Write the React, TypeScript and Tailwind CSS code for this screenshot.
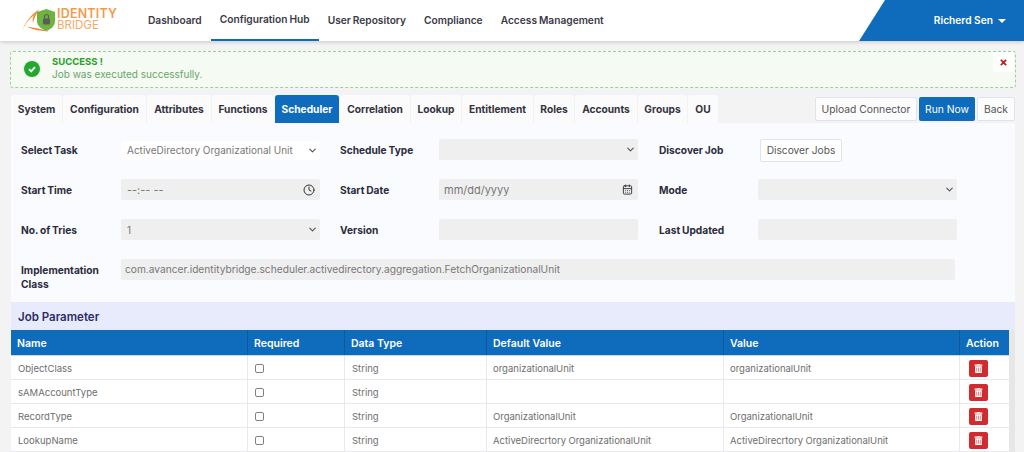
import React from "react";
import { ChevronDown, Clock, CalendarDays } from "lucide-react";
import { FaTrashAlt, FaTimes } from "react-icons/fa";

const nav = ["Dashboard", "Configuration Hub", "User Repository", "Compliance", "Access Management"];
const tabs: [string, string][] = [
  ["System", "w-[51px]"], ["Configuration", "w-[83px]"], ["Attributes", "w-[64px]"], ["Functions", "w-[62px]"],
  ["Scheduler", "w-[64px]"], ["Correlation", "w-[70px]"], ["Lookup", "w-[50px]"], ["Entitlement", "w-[71px]"],
  ["Roles", "w-[40px]"], ["Accounts", "w-[62px]"], ["Groups", "w-[49px]"], ["OU", "w-[30px]"],
];
const rows = [
  ["ObjectClass", "String", "organizationalUnit", "organizationalUnit"],
  ["sAMAccountType", "String", "", ""],
  ["RecordType", "String", "OrganizationalUnit", "OrganizationalUnit"],
  ["LookupName", "String", "ActiveDirecrtory OrganizationalUnit", "ActiveDirecrtory OrganizationalUnit"],
];
const cols = "grid grid-cols-[236px_97px_142px_237px_236px_50px]";

function Label({ children, w = "w-[99px]" }: { children: React.ReactNode; w?: string }) {
  return <div className={`${w} shrink-0 pt-[1px] text-[10.2px] font-bold leading-[14px] text-[#2c2c3c] [word-spacing:-0.6px]`}>{children}</div>;
}

function Field({ white, text, icon, w = "w-[199px]", textClass = "text-[10px]", pl = "pl-[6px]" }: { white?: boolean; text?: string; icon?: React.ReactNode; w?: string; textClass?: string; pl?: string }) {
  return (
    <div className={`${w} shrink-0 rounded-[2px] flex items-center justify-between ${pl} pr-[5px] ${textClass} text-[#777] ${white ? "bg-white h-[19px] mt-[1px]" : "bg-[#efefef] h-[21px]"}`}>
      <span className="truncate pt-[1px]">{text}</span>
      {icon}
    </div>
  );
}

const chev = <ChevronDown size={11} strokeWidth={2.5} className="text-[#555] mr-[-3px]" />;

export default function App() {
  return (
    <div className="w-[1024px] h-[452px] overflow-hidden bg-[#f3f3f3] font-['Inter','Liberation_Sans',sans-serif]">
      <header className="h-[41px] bg-white shadow-[0_1px_4px_rgba(0,0,0,0.18)] flex relative">
        <div className="w-[139px] pl-[20px] pt-[7px] flex shrink-0">
          <svg width="37" height="27" viewBox="0 0 37 27">
            <path d="M1 25.5 C5 16 11 7 19 2.5 C16 7 14 12 13 16 C12 12.5 13 10 14 8 C9 12 4 19 1 25.5Z" fill="#f28c38" />
            <path d="M7 19.5 C14 21 22 21.5 29 24.5 C21 24 13 23 7 19.5Z" fill="#f28c38" />
            <path d="M17 5 L26.5 2 L35 5 L35 14 C35 19 31 22 26.5 24 C21.5 22 17 19 17 14Z" fill="#6cb33f" />
            <rect x="23" y="11.5" width="7" height="6" rx="1" fill="#5b5b5b" />
            <path d="M24.5 11.5 V9.5 a2 2 0 0 1 4 0 V11.5" fill="none" stroke="#5b5b5b" strokeWidth="1.2" />
          </svg>
          <div className="mt-[1px] leading-[11.5px] text-[#f29a4c]">
            <div className="text-[12.5px] font-semibold tracking-[0.2px]">IDENTITY</div>
            <div className="text-[11.5px] font-normal text-[#f4a968]">BRIDGE</div>
          </div>
        </div>
        <nav className="flex text-[10.2px] font-semibold text-[#3a3a48] [word-spacing:-0.6px]">
          {nav.map((n) => (
            <div key={n} className={`px-[9px] h-[41px] flex items-center whitespace-nowrap ${n === "Configuration Hub" ? "border-b-[2px] border-[#0f6cbd]" : ""}`}>
              {n}
            </div>
          ))}
        </nav>
        <div className="absolute right-0 top-0 h-[41px] w-[165px] bg-[#0f6cbd] [clip-path:polygon(26px_0,100%_0,100%_100%,0_100%)] flex items-center justify-end pr-[18px] text-[10.2px] font-semibold text-white">
          Richerd Sen
          <span className="ml-[5px] w-0 h-0 border-x-[4px] border-x-transparent border-t-[4px] border-t-white" />
        </div>
      </header>

      <div className="mx-[10px] mt-[10px] h-[37px] w-[1006px] rounded-[3px] border border-dashed border-[#9ed09e] bg-[#f5faf3] flex relative">
        <div className="ml-[13px] mt-[9px] w-[16px] h-[16px] rounded-full bg-[#22a82e] flex items-center justify-center">
          <svg width="10" height="10" viewBox="0 0 10 10"><path d="M2 5.2 L4.2 7.4 L8 3" fill="none" stroke="#fff" strokeWidth="1.9" /></svg>
        </div>
        <div className="ml-[12px] mt-[3px] leading-[13px]">
          <div className="text-[9.5px] font-bold text-[#27a127]">SUCCESS !</div>
          <div className="text-[10px] text-[#6aa56a]">Job was executed successfully.</div>
        </div>
        <div className="absolute right-[1px] top-0 w-[21px] h-[20px] bg-white flex items-center justify-center">
          <FaTimes size={9} className="text-[#c01818]" />
        </div>
      </div>

      <div className="flex mt-[7px] ml-[11px] h-[28px] w-[1004px] items-start">
        <div className="flex gap-[1px]">
          {tabs.map(([t, w]) => (
            <div key={t} className={`${w} h-[28px] pt-[2px] rounded-t-[3px] flex items-center justify-center text-[10.2px] font-bold ${t === "Scheduler" ? "bg-[#0f6cbd] text-white" : "bg-[#fbfbfb] text-[#333340]"}`}>
              {t}
            </div>
          ))}
        </div>
        <div className="ml-auto mt-[2px] flex gap-[2px]">
          <div className="w-[102px] h-[24px] pt-[1px] rounded-[2px] border border-[#dfe3ee] bg-[#fcfcfc] flex items-center justify-center text-[10.3px] text-[#555]">Upload Connector</div>
          <div className="w-[56px] h-[24px] pt-[1px] rounded-[2px] bg-[#0f6cbd] flex items-center justify-center text-[10.3px] text-white">Run Now</div>
          <div className="w-[38px] h-[24px] pt-[1px] rounded-[2px] border border-[#dfe3ee] bg-[#fcfcfc] flex items-center justify-center text-[10.3px] text-[#555]">Back</div>
        </div>
      </div>

      <main className="ml-[11px] w-[1004px] h-[400px] bg-[#fafbff]">
        <div className="pt-[16px] pl-[10px] flex flex-col gap-[19px]">
          <div className="flex items-center h-[21px]">
            <Label w="w-[100px]">Select Task</Label>
            <Field white text="ActiveDirectory Organizational Unit" icon={chev} />
            <div className="w-[20px]" />
            <Label>Schedule Type</Label>
            <Field icon={chev} />
            <div className="w-[21px]" />
            <Label>Discover Job</Label>
            <div className="w-[82px] h-[23px] ml-[2px] mt-[2px] rounded-[2px] border border-[#dfe3ee] bg-white flex items-center justify-center text-[10.2px] text-[#555]">Discover Jobs</div>
          </div>
          <div className="flex items-center h-[21px]">
            <Label w="w-[100px]">Start Time</Label>
            <Field textClass="text-[11px]" text="--:-- --" icon={<Clock size={12} className="text-[#333]" />} />
            <div className="w-[20px]" />
            <Label>Start Date</Label>
            <Field textClass="text-[11px]" pl="pl-[5px]" text="mm/dd/yyyy" icon={<CalendarDays size={11} className="text-[#333]" />} />
            <div className="w-[21px]" />
            <Label>Mode</Label>
            <Field icon={chev} />
          </div>
          <div className="flex items-center h-[21px]">
            <Label w="w-[100px]">No. of Tries</Label>
            <Field text="1" icon={chev} />
            <div className="w-[20px]" />
            <Label>Version</Label>
            <Field />
            <div className="w-[21px]" />
            <Label>Last Updated</Label>
            <Field />
          </div>
          <div className="flex items-start h-[31px]">
            <div className="mt-[3px]"><Label w="w-[100px]">Implementation Class</Label></div>
            <Field w="w-[834px]" pl="pl-[4px]" textClass="text-[10.2px]" text="com.avancer.identitybridge.scheduler.activedirectory.aggregation.FetchOrganizationalUnit" />
          </div>
        </div>

        <div className="mt-[12px] h-[28px] bg-[#e8ebfb] flex items-center pl-[7px] pt-[4px] text-[11.5px] font-semibold text-[#2b2b6b]">Job Parameter</div>

        <div className="flex">
          <div className="w-[998px] shrink-0">
            <div className={`${cols} h-[26px] bg-[#0f6cbd] text-[10.5px] font-semibold text-white border-b border-[#c9d6e6]`}>
              {["Name", "Required", "Data Type", "Default Value", "Value", "Action"].map((h, i) => (
                <div key={h} className={`flex items-center border-[#0b5a9e] ${i ? "border-l" : ""} pl-[6px] pt-[2px]`}>{h}</div>
              ))}
            </div>
            {rows.map((r) => (
              <div key={r[0]} className={`${cols} h-[24px] bg-white border-b border-[#e8e8ee] text-[9.5px] text-[#6e6e6e] [word-spacing:-0.4px]`}>
                <div className="flex items-center pl-[7px] pt-[3px]">{r[0]}</div>
                <div className="flex items-center pl-[7px] pt-[2px] border-l border-[#e8e8ee]">
                  <div className="w-[9px] h-[9px] rounded-[2px] border border-[#808080] bg-white" />
                </div>
                <div className="flex items-center pl-[7px] pt-[3px] border-l border-[#e8e8ee]">{r[1]}</div>
                <div className="flex items-center pl-[6px] pt-[3px] border-l border-[#e8e8ee]">{r[2]}</div>
                <div className="flex items-center pl-[6px] pt-[3px] border-l border-[#e8e8ee]">{r[3]}</div>
                <div className="flex items-center pl-[9px] pt-[2px] border-l border-[#e8e8ee]">
                  <div className="w-[19px] h-[17px] rounded-[2px] bg-[#d02b2f] flex items-center justify-center">
                    <FaTrashAlt size={9} className="text-white" />
                  </div>
                </div>
              </div>
            ))}
          </div>
          <div className="w-[6px] bg-[#e7e7e7]" />
        </div>
      </main>
    </div>
  );
}
